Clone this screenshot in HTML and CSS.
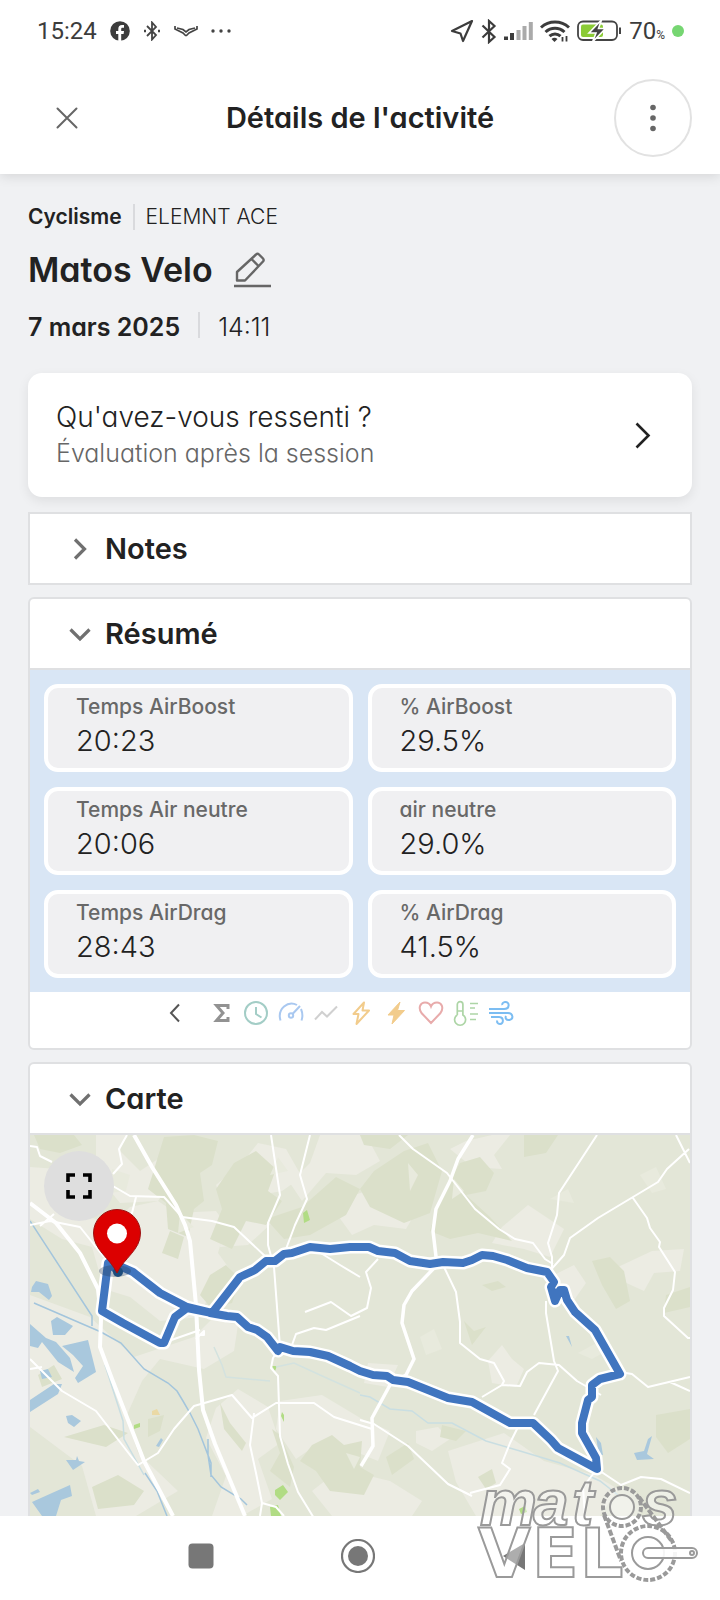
FILE: index.html
```html
<!DOCTYPE html>
<html lang="fr">
<head>
<meta charset="utf-8">
<meta name="viewport" content="width=device-width, initial-scale=1">
<title>Détails de l'activité</title>
<link rel="stylesheet" href="styles.css">
</head>
<body>
<header class="top">
  <div class="status">
    <div class="status-left">
      <span class="clock">15:24</span>
      <svg width="20" height="20" viewBox="0 0 20 20"><circle cx="10" cy="10" r="9.800" fill="#3c3c3c"/><path d="M8.300 20v-7H6v-3h2.300V8c0-2.600 1.400-4 3.700-4h2v2.800h-1.400c-1 0-1.400.5-1.400 1.400V10H14l-.4 3h-2.400v7z" fill="#fff"/></svg>
      <svg width="18" height="20" viewBox="0 0 18 20" fill="none" stroke="#444" stroke-width="1.800"><path d="M4 5l9 9-4 4.500v-17L13 6l-9 9"/><path d="M1 10h2M15 10h2" stroke-width="2.500"/></svg>
      <svg width="24" height="12" viewBox="0 0 24 12" fill="none" stroke="#444" stroke-width="1.700"><path d="M1 1v3l8 4 2.500 2.500h1L15 8l8-4V1"/><path d="M3 3l6 1.500 3 2.500 3-2.500L21 3"/></svg>
      <svg width="20" height="4" viewBox="0 0 20 4" fill="#444"><circle cx="2" cy="2" r="1.700"/><circle cx="10" cy="2" r="1.700"/><circle cx="18" cy="2" r="1.700"/></svg>
    </div>
    <div class="status-right">
      <svg width="24" height="24" viewBox="0 0 24 24" fill="none" stroke="#3c3c3c" stroke-width="2.200" stroke-linejoin="round"><path d="M22 2L2 12l8.500 2.500L13 22z"/></svg>
      <svg width="16" height="25" viewBox="0 0 16 25" fill="none" stroke="#3c3c3c" stroke-width="2.200"><path d="M1.500 6.500l12 11.500L8 23V2l5.500 5L1.500 18.500"/></svg>
      <svg width="29" height="20" viewBox="0 0 29 20" fill="#aaa"><path d="M0 15.500h4V19H0zM6 12h4v7H6z" fill="#3c3c3c"/><path d="M12.500 9h4v10h-4zM18.500 5h4v14h-4zM24.800 1h4v18h-4z"/></svg>
      <svg width="30" height="23" viewBox="0 0 30 23" fill="none" stroke="#3c3c3c" stroke-width="3"><path d="M1 7.500c8-7.300 20-7.300 28 0M5.500 12c5.500-5 13.500-5 19 0M9.500 16.200c3.200-3 7.800-3 11 0"/><path d="M11.500 19c2-1.600 4-1.600 6 0l-3 3z" fill="#3c3c3c" stroke="none"/><path d="M22.500 17v4.500M26.500 16v5.500" stroke-width="1.800"/></svg>
      <svg width="45" height="22" viewBox="0 0 45 22"><rect x="1" y="1.500" width="39" height="18.500" rx="5" fill="#fff" stroke="#444" stroke-width="1.800"/><rect x="4" y="4.500" width="22" height="12.500" rx="2" fill="#8bcb36"/><path d="M24.500 0L12 13h7l-3.500 9L28.500 8.500h-7z" fill="#444" stroke="#fff" stroke-width="1.600"/><path d="M43 7.500v6.500" stroke="#444" stroke-width="2"/></svg>
      <span class="level">70<small>%</small></span>
      <i class="active-dot"></i>
    </div>
  </div>
  <div class="bar">
    <button class="close" aria-label="Fermer"><svg width="22" height="22" viewBox="0 0 22 22" fill="none" stroke="#666" stroke-width="2" stroke-linecap="round"><path d="M1.500 1.500l19 19M20.500 1.500l-19 19"/></svg></button>
    <h1>Détails de l'activité</h1>
    <button class="more" aria-label="Plus d'options"><svg width="6" height="28" viewBox="0 0 6 28" fill="#666"><circle cx="3" cy="3.500" r="2.800"/><circle cx="3" cy="14" r="2.800"/><circle cx="3" cy="24.500" r="2.800"/></svg></button>
  </div>
</header>

<main>
  <div class="row kind"><strong>Cyclisme</strong><i class="rule"></i><span>ELEMNT ACE</span></div>
  <div class="row name"><h2>Matos Velo</h2><button aria-label="Modifier le nom"><svg width="38" height="36" viewBox="0 0 38 36" fill="none" stroke="#666" stroke-width="2.400" stroke-linejoin="round"><path d="M4 28.500v-8.500L23 2.500q1.500-1.500 3 0l4 4q1.300 1.500 0 3L12 28.500zM18.500 7l7 7"/><path d="M1 34h37"/></svg></button></div>
  <div class="row date"><strong>7 mars 2025</strong><i class="rule"></i><span>14:11</span></div>

  <button class="feel">
    <span class="feel-text"><span class="feel-title">Qu'avez-vous ressenti ?</span><span class="feel-sub">Évaluation après la session</span></span>
    <svg width="16" height="27" viewBox="0 0 16 27" fill="none" stroke="#222" stroke-width="2.600"><path d="M1.500 1.500l12 12-12 12"/></svg>
  </button>

  <section class="panel square">
    <h3><button aria-expanded="false"><svg width="22" height="22" viewBox="0 0 22 22" fill="none" stroke="#707070" stroke-width="3.200"><path d="M6 1.500l9.500 9.500L6 20.500"/></svg>Notes</button></h3>
  </section>

  <section class="panel">
    <h3 class="open"><button aria-expanded="true"><svg width="22" height="22" viewBox="0 0 22 22" fill="none" stroke="#707070" stroke-width="3.200"><path d="M1.500 6.500l9.500 9.500 9.500-9.500"/></svg>Résumé</button></h3>
    <dl class="stats">
      <div><dt>Temps AirBoost</dt><dd>20:23</dd></div>
      <div><dt>% AirBoost</dt><dd>29.5%</dd></div>
      <div><dt>Temps Air neutre</dt><dd>20:06</dd></div>
      <div><dt>air neutre</dt><dd>29.0%</dd></div>
      <div><dt>Temps AirDrag</dt><dd>28:43</dd></div>
      <div><dt>% AirDrag</dt><dd>41.5%</dd></div>
    </dl>
    <div class="tabs">
      <button class="prev" aria-label="Précédent"><svg viewBox="0 0 24 24" stroke="#555"><path d="M16 3.500L8 12l8 8.500"/></svg></button>
      <button aria-label="Total"><svg class="bold" viewBox="0 0 24 24" stroke="#929292"><path d="M19 8V4.500H7.500L14 12l-6.500 7.500H19V16"/></svg></button>
      <button aria-label="Temps"><svg viewBox="0 0 24 24" stroke="#a3cdc6"><circle cx="12" cy="12" r="11"/><path d="M12 6v7l5.500 3.500"/></svg></button>
      <button aria-label="Vitesse"><svg viewBox="0 0 24 24" stroke="#a9c8f0"><path d="M1.500 19.500C-2 8 9-1 18 4M22 8q2.500 6 .500 11.500"/><circle cx="12" cy="14.500" r="2.200"/><path d="M13.500 13l7.500-8"/></svg></button>
      <button aria-label="Altitude"><svg viewBox="0 0 24 24" stroke="#d0d0d0"><path d="M1 18.500l7-7.500 5 4.500L23 5.500"/></svg></button>
      <button aria-label="Puissance"><svg viewBox="0 0 24 24" stroke="#f2cc8c" stroke-linejoin="round"><path d="M15 1.500L4.500 13h5L7.500 23 20 9.500h-6.500z"/></svg></button>
      <button aria-label="Puissance moyenne"><svg viewBox="0 0 24 24" stroke="#f2cc8c"><path d="M16 1L4 14h6L8 23 20.500 9.500h-7z" fill="#f2cc8c" stroke-width="1"/></svg></button>
      <button aria-label="Fréquence cardiaque"><svg viewBox="0 0 24 24" stroke="#e8abab"><path d="M12 22L2.500 12C-1.500 6 2 1.500 6 1.500c3 0 5 1.500 6 4 1-2.500 3-4 6-4 4 0 7.500 4.500 3.500 10.500z"/></svg></button>
      <button aria-label="Température"><svg viewBox="0 0 24 24" stroke="#add5a6"><path d="M3.300 14V3.500a2.800 2.800 0 0 1 5.600 0V14a5.500 5.500 0 1 1-5.600 0M3.300 10h5.600M16 2.500h8M16 7h5M16 13h8M16 18.500h6" stroke-width="1.700"/></svg></button>
      <button aria-label="Vent"><svg viewBox="0 0 24 24" stroke="#7cbdf2"><path d="M0 8h15c6 0 6-7.500 1-7-2.500.5-3 2-2.500 3M0 12h19c5 0 6 6 1.500 7-3.500.5-4.500-2-3.500-4M2 16h8c5 0 5 7 1 7-2.500 0-3.500-2-2.500-3.500"/></svg></button>
    </div>
  </section>

  <section class="panel map-panel">
    <h3 class="open"><button aria-expanded="true"><svg width="22" height="22" viewBox="0 0 22 22" fill="none" stroke="#707070" stroke-width="3.200"><path d="M1.500 6.500l9.500 9.500 9.500-9.500"/></svg>Carte</button></h3>
    <div class="map">
      <svg class="map-art" viewBox="0 0 660 381" preserveAspectRatio="xMidYMid slice" role="img" aria-label="Tracé du parcours">
        <rect width="660" height="381" fill="#e3e6d7"/>
        <g fill="#ecece3">
          <path d="M0 32l28 2 22 16 10 32 22 8 18-18 28-6 18 12 40-2 10 14-8 28 16 22-22 12-12 30-40 4-30-24-26-8-12-42-30-8-32-20z"/>
          <path d="M0 160l60 22 44 40 60-20 18-18 26 6-4 26-30 18-44-10-18 22-16 36 12 36 40 38-42 25h-40l-14-50-52-39z"/>
          <path d="M66 0l30 0-6 16 20 20 24-16 8 26-14 20-38 2-24-30zM228 8l28 6 16 28-20 14-22 4 14 26-26 24-28 2 6-36-10-26 26-22zM290 0h46l14 26-24 14-30-2-24 28-12-18 20-20z"/>
          <path d="M208 254l30 18 12 36-22 16 14 40-30 17h-30l14-40-20-38 10-30zM250 266l42-6 40 24 28 12-12 30-34-14-22-6-26 18-20-30zM282 356l28-22 50 12 32 20-10 15h-80z"/>
          <path d="M350 52l24-8 16 26-14 24-32-4-22 10-16-22 18-18zM436 6l26-6h18l-16 20 8 14-30-2-22-18zM472 92l26-22 36 24-14 28-26-8-32-6zM520 142l24-12 12 18-14 20-22-8zM588 132l34-16 32-2-4 22-26 2-10 18-22-10zM458 226l14-16 10 14 12 10-8 18-24-4z"/>
          <path d="M418 316l56-18 40 28 50 14 24 14-18 27H446l-20-34zM338 228l30 2-10 22-24-4zM386 296l22-4 12 12-18 12-16-8z"/>
        </g>
        <g fill="#dbe0ca">
          <path d="M134 2l30-2 24 6-6 24-12 8 4 28-10 8-6 28-20-8-2-26-18-14zM204 28l22-12 20 18-8 22 14 10-16 24-20-4-14 28-22-10 12-30-6-20zM4 0h40l8 10-22 8-20-4zM236 84l36-12 34-30 24 12-14 26-36 20-26 4z"/>
          <path d="M344 36l30-20 24-8 14 28-12 42-26 10-34-16-10-18zM410 62l20-34 20-6 14 16-8 18-20 4 24 22 22 24-34-8-28 6-20-8zM330 0h48l-18 14-26-4zM494 0h34l-12 18-22 4zM562 126l18-4 14 14 6 30-14 8-14-24zM636 160l24-8v20l-26 6zM626 280l34-6v30l-22 14-12-16z"/>
          <path d="M180 140l16-10 14 14-8 24-20 6-12-14zM242 294l8 6 14 32-4 20-20-16 10-18zM282 310l20-10 12 10 18-4-2 26 14 8-10 20-34-4-14-20-16-10zM190 268l10 20 16 20-4 8-18-22zM118 284l16-4-4 16-12 6zM34 302l40-12 24 8-22 14zM62 352l26-12 26 16-10 14-36 4zM356 322l22-14 6 16-22 16zM448 342l14-8 4 14-10 6zM412 290l24 6-10 10-16-4zM452 150l16-4 8 6-14 4zM434 186l10 10 12-4-14 18zM8 240l16-10 8 14-20 8zM140 96l14 6-6 22-16-6z"/>
        </g>
        <g fill="#e8eadd"><path d="M82 34l18 6-4 16-16 2zM150 78l14 14-16 6zM248 22l10 14-18 4zM378 28l10 12-8 16zM424 44l10 12-12 8zM520 64l18-10 6 14zM548 218l22-12 10 8-18 10zM390 202l14-8 8 20-16 6zM610 40l16-8 10 22-14 4zM316 318l14 4-6 12z"/></g>
        <g fill="#a9c8dd">
          <path d="M2 152l4-6 12 3 4 12-3 4-10-8-8 0zM21 186l6-4 16 9-8 9-12 0zM0 189l16 14 10 4 14 16 4 14-16-10-16-20-4 6-8-2zM32 211l26-6 8 32-18 11-3-5 8-12-10-11zM10 236l8-2 4 8-10 2zM0 265l24-16 8 0-4 10-28 18zM36 281l6-1 9 6-7 6-6-4zM36 325l10 0 1-4 2 5 6 1-12 8zM0 358l8-4 2 3-8 3zM2 367l20-9 18-8 2 11-11 4-5 16H12z"/>
          <path d="M536 201l3 0 3 11zM566 302l5 6 2 12-4 0zM604 318l10-2 4-12 4-3-5 18 7 5-17 1zM126 311l5-8 2 2-4 7z"/>
        </g>
        <g fill="#b1dc84"><path d="M273 78l4-3 3 10-6 3zM245 355l8-5 5 7-8 8-5-5zM240 372l8-2 3 11h-10zM252 277l2 3v7l-3-6zM242 231h5l-2 5zM104 290l6-2v4l-6 2zM489 374l6-3 2 6-6 2z"/></g>
        <path d="M122 276l5-2 3 6-8 0z" fill="#ead9a5"/>
        <g fill="none" stroke="#a3c5dc" stroke-width="1.500">
          <path d="M0 86l62 95v10M4 168l67 29 20 11 23 26 24 14 9 8 6 10 7 12 8 16 13 34v14M178 304v16l3 20 10 12 20 12 6 6M115 338l12 18 10 25"/>
          <path d="M75 230l18 56 1 18 20 36M330 260l10 2 20 12 22 2 16 12 24 0 34 18 34 10 40 12 40 18 18 14" stroke="#c9dee2"/>
          <path d="M184 212l8 18 4 12 44 4M246 232l18-4 26 12 40 18" stroke="#d3e2df"/>
        </g>
        <g fill="none" stroke="#fff" stroke-linejoin="round">
          <path d="M104 0l18 32 24 38 9 20 5 16 6 64 3 65 4 40 12 34 30 72" stroke-width="4"/>
          <path d="M0 68l26 20 24 30 18 36 3 30-1 28 12 32 32 82 29 55" stroke-width="4"/>
          <path d="M443 0l-15 24-8 22-14 28-3 22 4 34-25 26-8 14-2 18 12 36-8 16-16 10-18 33 1 28-12 20" stroke-width="3.500"/>
          <g stroke-width="2">
            <path d="M0 11l7 1 3 9 12 6M97 0l-8 14 3 15-9 10M76 47l24 14 34 1 18 20 30 4 22 6 32 30M106 62l-4 16-8 4M0 90l20-4 30 6 24 30M10 91l14-12"/>
            <path d="M241 0l9 60-12 28v22l6 22 6 80-7 11-2 10 7 8 2 60 8 28 10 28 22 36 14 4M280 0l-10 40 7 24-12 26-9 24M278 110l32 20 20 12M262 210l4-11 18-6 12 2 34-14"/>
            <path d="M0 224l32 32 34 20 34 44 8 10 20-12 16-24 20-23 38-11 20 23 24-15h38l20 14 38 12M224 278l-4 32 6 28 6 30 14 4 8 9M232 368l-2 13M166 204l8-8v4h-4M130 209l40-14M0 234l12-2"/>
            <path d="M369 0l14 14 34 24 28 36 24 20 16 10 18 4 12 16 8 5M567 0l-38 58-2 22-9 28 4 14v14M518 138l16-18 6-17 28-20 60-36 9-13 22-20M646 0l14 28M603 63l14 20 3 10 10 14-1 5 16 25-2 18-9 18v8l24 22h7M414 132l12 25 4 30v21l20 16 14 4 10 18-2 4 18 1 7-14 12-9 20 2 18 16 24 14M516 166v12l8 48 4 10-24 44M452 262l20-12M590 237l12 2 16 13 42-10M640 247l20 9"/>
            <path d="M348 124l-12 13 5 16-4 20-16 8-20-14-26 10M330 285l14 4 34 22 40 38 24 12M490 288l-10 20-8 20 8 6-10 16-30 8M567 334l24 16 20-8 20 2 29 14M567 334l-14 18 2 29"/>
          </g>
        </g>
        <defs><path id="route" d="M87 135l-9-7-6 48 21 12 37 20h4l11-26 12-9 25 5M87 130l16 7 27 21 27 14 25 6 28-36 15-7 11-9h9l9-7 8-1 18-6 20 2 20-2h19l9 4 17 2 15 8 20 3 13-2 20 1 9-3 10-5 11 1 14 4 20 8 20 4 7 10-3 5 4 14 5-11h4l3 10 8 12 20 18 25 44-20 5-8 6v12l-4 3-6 23v10l14 25 1 11-39-21-7-8-18-17h-23l-38-21-24-4-40-16-15-2-6-4-14-1-13-4-10-5-22-10-18-4-17-1-13-4-2 4-11-14-10-7-9-3-11-10-10-1-17-3"/></defs>
        <g fill="none" stroke-linejoin="round" stroke-linecap="round">
          <use href="#route" stroke="#fff" stroke-width="13"/>
          <use href="#route" stroke="#4075bf" stroke-width="8"/>
        </g>
        <ellipse cx="85" cy="136" rx="16" ry="6" fill="#24405f" opacity=".35"/>
        <circle cx="88" cy="137" r="5" fill="#1d4c7c"/>
        <path d="M87 138C80 123 63.500 115 63.500 98a23.500 23.500 0 0 1 47 0C110.500 115 94 123 87 138z" fill="#dc0000" stroke="#9c1414"/>
        <circle cx="87" cy="98.500" r="10" fill="#fff"/>
      </svg>
      <button class="expand" aria-label="Plein écran"><svg width="26" height="26" viewBox="0 0 26 26" fill="none" stroke="#000" stroke-width="3.600"><path d="M2 9V2h7M17 2h7v7M24 17v7h-7M9 24H2v-7"/></svg></button>
    </div>
  </section>
</main>

<nav class="system">
  <button aria-label="Applications récentes"><svg width="34" height="34" viewBox="0 0 34 34"><rect x="4.500" y="4.500" width="25" height="25" rx="4" fill="#777"/></svg></button>
  <button aria-label="Accueil"><svg width="34" height="34" viewBox="0 0 34 34"><circle cx="17" cy="17" r="16" fill="none" stroke="#777" stroke-width="2.200"/><circle cx="17" cy="17" r="10" fill="#777"/></svg></button>
  <button aria-label="Retour"><svg width="34" height="34" viewBox="0 0 34 34"><path d="M5 17L27 4v27z" fill="#777"/></svg></button>
  <svg class="brand" width="222" height="98" viewBox="0 0 222 98" role="img" aria-label="Matos Velo">
    <g class="brand-word">
      <text class="brand-top" x="2 55 94 164" y="40">mats</text>
      <text class="brand-bottom" x="0 54 102" y="92">VEL</text>
    </g>
    <g fill="#fff" fill-opacity=".3" stroke="#9a9a9a" stroke-width="2">
      <circle cx="144" cy="22" r="19" stroke-width="4" stroke-dasharray="5 2"/>
      <circle cx="144" cy="22" r="12"/>
      <circle cx="170" cy="68" r="27" fill-opacity=".9" stroke-width="4" stroke-dasharray="5 2"/>
      <circle cx="170" cy="68" r="16"/>
      <path d="M126 30l17 46M161 12l34 46" fill="none" stroke-width="4" stroke-dasharray="6 2"/>
      <path d="M170 63h44a5 5 0 0 1 0 10h-44a5 5 0 0 1 0-10z" fill-opacity=".9"/>
      <circle cx="214" cy="68" r="2"/>
    </g>
  </svg>
</nav>
</body>
</html>
```
FILE: styles.css
```css
* { box-sizing: border-box; }
body {
  margin: 0;
  background: #f0f1f3;
  color: #222;
  font-family: Inter, "Liberation Sans", sans-serif;
  font-feature-settings: "cv11";
}
button {
  padding: 0;
  border: 0;
  background: none;
  color: inherit;
  font: inherit;
  font-feature-settings: inherit;
  cursor: pointer;
}
svg { display: block; flex: none; }
h1, h2, h3, dl, dd { margin: 0; }

.top {
  position: relative;
  background: #fff;
  box-shadow: 0 2px 12px rgba(0, 0, 0, .12);
}
.status {
  display: flex;
  justify-content: space-between;
  align-items: center;
  height: 62px;
  padding: 0 36px 0 37px;
  color: #3c3c3c;
  font-family: Roboto, sans-serif;
}
.status-left, .status-right { display: flex; align-items: center; }
.status-left { gap: 13px; }
.status-right { gap: 7px; }
.clock, .level { font-size: 24px; line-height: 30px; }
.level small { font-size: 12px; line-height: 1; }
.active-dot { width: 12px; height: 12px; border-radius: 50%; background: #76d672; }
.bar {
  display: grid;
  grid-template-columns: 78px 1fr 78px;
  align-items: center;
  height: 112px;
  padding: 0 28px;
}
.bar h1 { font-size: 29px; line-height: 36px; font-weight: 600; text-align: center; }
.close, .more { display: grid; place-items: center; height: 78px; }
.more { border: 2px solid #e2e2e2; border-radius: 50%; }

main { padding: 30px 28px 0; }
.row { display: flex; align-items: center; }
.row strong { font-weight: 600; }
.row span { font-weight: 300; }
.rule { width: 2px; height: 26px; background: #d9dadd; }
.kind { gap: 11px; font-size: 21px; line-height: 26px; }
.name { gap: 20px; margin-top: 22px; }
.name h2 { font-size: 34px; line-height: 36px; font-weight: 600; }
.date { gap: 18px; margin-top: 24px; font-size: 25px; line-height: 30px; }
.date .rule { align-self: flex-start; }

.feel {
  display: flex;
  justify-content: space-between;
  align-items: center;
  width: 100%;
  margin: 31px 0 15px;
  padding: 26px 41px 26px 28px;
  border-radius: 14px;
  background: #fff;
  box-shadow: 0 4px 12px rgba(0, 0, 0, .08);
  text-align: left;
}
.feel-text { display: grid; }
.feel-title { font-size: 28px; line-height: 36px; font-weight: 300; }
.feel-sub { color: #666; font-size: 25px; line-height: 36px; font-weight: 300; }

.panel {
  margin-bottom: 12px;
  border: 2px solid #dfe0e2;
  border-radius: 6px;
  background: #fff;
  overflow: hidden;
}
.square { border-radius: 0; }
.panel h3 { font-size: 29px; line-height: 36px; font-weight: 600; }
.panel h3 button {
  display: flex;
  align-items: center;
  gap: 14px;
  width: 100%;
  height: 69px;
  padding: 0 39px;
}
.panel .open { border-bottom: 2px solid #dfe0e2; }

.stats {
  display: grid;
  grid-template-columns: 1fr 1fr;
  gap: 15px;
  padding: 14px;
  background: #d9e6f5;
}
.stats div {
  padding: 6px 28px;
  border: 4px solid #fff;
  border-radius: 14px;
  background: #f0f0f2;
}
.stats dt { color: #686868; font-size: 21px; line-height: 26px; font-weight: 500; }
.stats dd { font-size: 29px; line-height: 42px; font-weight: 300; }

.tabs {
  display: flex;
  justify-content: center;
  gap: 11px;
  height: 56px;
  padding: 9px 44px 0 0;
}
.tabs button { height: 24px; }
.tabs .prev { margin-right: 11px; }
.tabs svg { width: 24px; height: 24px; fill: none; stroke-width: 2; overflow: visible; }
.tabs .bold { stroke-width: 3; }

.map-panel { margin-bottom: 0; border-bottom: 0; border-radius: 6px 6px 0 0; }
.map { position: relative; }
.map-art { width: 100%; height: 381px; }
.expand {
  position: absolute;
  top: 16px;
  left: 14px;
  display: grid;
  place-items: center;
  width: 70px;
  height: 70px;
  border-radius: 50%;
  background: #dedede;
}

.system {
  position: relative;
  display: flex;
  justify-content: center;
  gap: 123px;
  padding: 23px 4px 27px 0;
  background: #fff;
}
.brand { position: absolute; right: 20px; bottom: 17px; overflow: visible; }
.brand-word {
  fill: #fff;
  fill-opacity: .4;
  stroke: #9a9a9a;
  stroke-width: 2;
  font-weight: 700;
}
.brand-top { font-family: "Liberation Sans", sans-serif; font-size: 64px; font-style: italic; }
.brand-bottom { font-family: "DejaVu Sans", sans-serif; font-size: 68px; }
```
